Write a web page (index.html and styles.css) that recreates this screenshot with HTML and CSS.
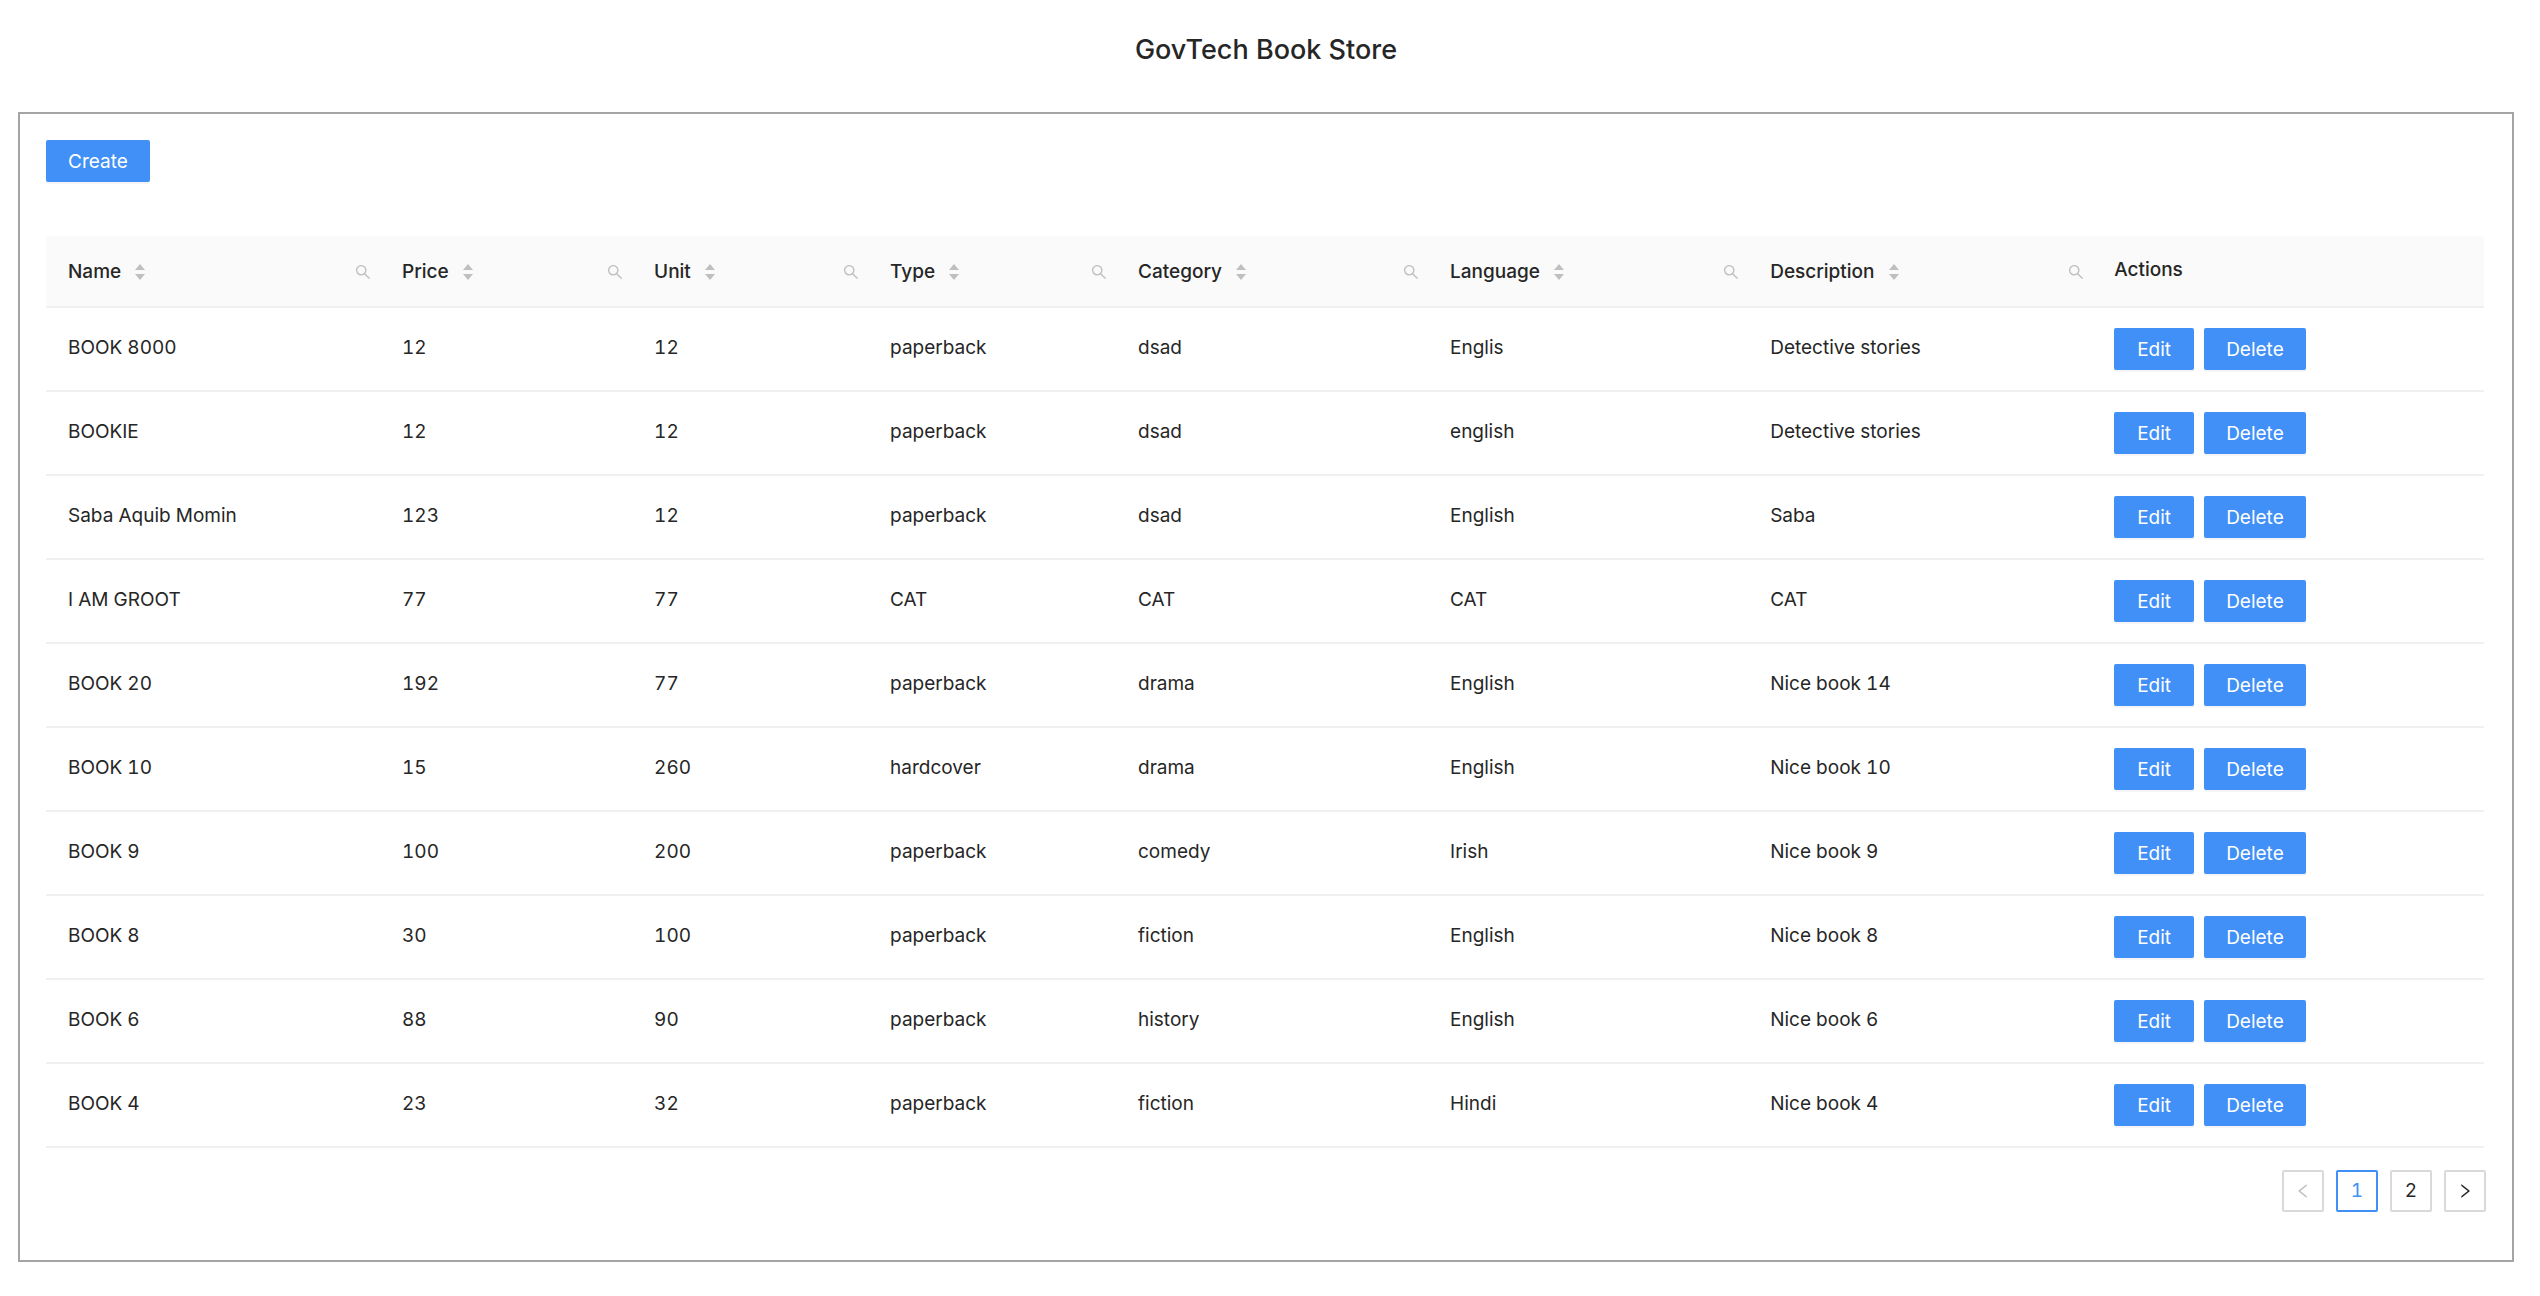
FILE: index.html
```html
<!DOCTYPE html>
<html lang="en">
<head>
<meta charset="utf-8">
<title>GovTech Book Store</title>
<link rel="stylesheet" href="styles.css">
</head>
<body>
<svg class="sprite" aria-hidden="true">
  <symbol id="sort" viewBox="0 0 10 16"><path d="M5 0L10 6H0zM0 10H10L5 16z"/></symbol>
  <symbol id="search" viewBox="0 0 1024 1024"><path d="M909.6 854.5L649.9 594.8C690.2 542.7 712 479 712 412c0-80.2-31.3-155.4-87.9-212.1-56.6-56.7-132-87.9-212.1-87.9s-155.5 31.3-212.1 87.9C143.2 256.5 112 331.8 112 412c0 80.1 31.3 155.5 87.9 212.1C256.5 680.8 331.8 712 412 712c67 0 130.6-21.8 182.7-62l259.7 259.6a8.2 8.2 0 0011.6 0l43.6-43.5a8.2 8.2 0 000-11.6zM570.4 570.4C528 612.7 471.8 636 412 636s-116-23.3-158.4-65.6C211.3 528 188 471.8 188 412s23.3-116.1 65.6-158.4C296 211.3 352.2 188 412 188s116.1 23.2 158.4 65.6S636 352.2 636 412s-23.3 116.1-65.6 158.4z"/></symbol>
  <symbol id="left" viewBox="0 0 1024 1024"><path d="M724 218.3V141c0-6.7-7.7-10.4-12.9-6.3L260.3 486.8a31.86 31.86 0 000 50.3l450.8 352.1c5.3 4.1 12.9.4 12.9-6.3v-77.3c0-4.9-2.3-9.6-6.1-12.6l-360-281 360-281.1c3.8-3 6.1-7.7 6.1-12.6z"/></symbol>
  <symbol id="right" viewBox="0 0 1024 1024"><path d="M765.7 486.8L314.9 134.7A7.97 7.97 0 00302 141v77.3c0 4.9 2.3 9.6 6.1 12.6l360 281.1-360 281.1c-3.9 3-6.1 7.7-6.1 12.6V883c0 6.7 7.7 10.4 12.9 6.3l450.8-352.1a31.96 31.96 0 000-50.4z"/></symbol>
</svg>
<h1 class="title">GovTech Book Store</h1>
<main class="panel">
  <button class="btn" type="button">Create</button>
  <table class="books">
    <colgroup>
      <col class="col-name"><col class="col-price"><col class="col-unit"><col class="col-type"><col class="col-category"><col class="col-language"><col class="col-description"><col>
    </colgroup>
    <thead>
      <tr>
        <th scope="col"><div class="head"><span>Name</span><svg class="sort"><use href="#sort"/></svg><button class="filter" type="button" aria-label="Search name"><svg class="icon"><use href="#search"/></svg></button></div></th>
        <th scope="col"><div class="head"><span>Price</span><svg class="sort"><use href="#sort"/></svg><button class="filter" type="button" aria-label="Search price"><svg class="icon"><use href="#search"/></svg></button></div></th>
        <th scope="col"><div class="head"><span>Unit</span><svg class="sort"><use href="#sort"/></svg><button class="filter" type="button" aria-label="Search unit"><svg class="icon"><use href="#search"/></svg></button></div></th>
        <th scope="col"><div class="head"><span>Type</span><svg class="sort"><use href="#sort"/></svg><button class="filter" type="button" aria-label="Search type"><svg class="icon"><use href="#search"/></svg></button></div></th>
        <th scope="col"><div class="head"><span>Category</span><svg class="sort"><use href="#sort"/></svg><button class="filter" type="button" aria-label="Search category"><svg class="icon"><use href="#search"/></svg></button></div></th>
        <th scope="col"><div class="head"><span>Language</span><svg class="sort"><use href="#sort"/></svg><button class="filter" type="button" aria-label="Search language"><svg class="icon"><use href="#search"/></svg></button></div></th>
        <th scope="col"><div class="head"><span>Description</span><svg class="sort"><use href="#sort"/></svg><button class="filter" type="button" aria-label="Search description"><svg class="icon"><use href="#search"/></svg></button></div></th>
        <th scope="col" class="plain">Actions</th>
      </tr>
    </thead>
    <tbody>
      <tr><td>BOOK 8000</td><td>12</td><td>12</td><td>paperback</td><td>dsad</td><td>Englis</td><td>Detective stories</td><td class="actions"><div class="group"><button class="btn" type="button">Edit</button><button class="btn" type="button">Delete</button></div></td></tr>
      <tr><td>BOOKIE</td><td>12</td><td>12</td><td>paperback</td><td>dsad</td><td>english</td><td>Detective stories</td><td class="actions"><div class="group"><button class="btn" type="button">Edit</button><button class="btn" type="button">Delete</button></div></td></tr>
      <tr><td>Saba Aquib Momin</td><td>123</td><td>12</td><td>paperback</td><td>dsad</td><td>English</td><td>Saba</td><td class="actions"><div class="group"><button class="btn" type="button">Edit</button><button class="btn" type="button">Delete</button></div></td></tr>
      <tr><td>I AM GROOT</td><td>77</td><td>77</td><td>CAT</td><td>CAT</td><td>CAT</td><td>CAT</td><td class="actions"><div class="group"><button class="btn" type="button">Edit</button><button class="btn" type="button">Delete</button></div></td></tr>
      <tr><td>BOOK 20</td><td>192</td><td>77</td><td>paperback</td><td>drama</td><td>English</td><td>Nice book 14</td><td class="actions"><div class="group"><button class="btn" type="button">Edit</button><button class="btn" type="button">Delete</button></div></td></tr>
      <tr><td>BOOK 10</td><td>15</td><td>260</td><td>hardcover</td><td>drama</td><td>English</td><td>Nice book 10</td><td class="actions"><div class="group"><button class="btn" type="button">Edit</button><button class="btn" type="button">Delete</button></div></td></tr>
      <tr><td>BOOK 9</td><td>100</td><td>200</td><td>paperback</td><td>comedy</td><td>Irish</td><td>Nice book 9</td><td class="actions"><div class="group"><button class="btn" type="button">Edit</button><button class="btn" type="button">Delete</button></div></td></tr>
      <tr><td>BOOK 8</td><td>30</td><td>100</td><td>paperback</td><td>fiction</td><td>English</td><td>Nice book 8</td><td class="actions"><div class="group"><button class="btn" type="button">Edit</button><button class="btn" type="button">Delete</button></div></td></tr>
      <tr><td>BOOK 6</td><td>88</td><td>90</td><td>paperback</td><td>history</td><td>English</td><td>Nice book 6</td><td class="actions"><div class="group"><button class="btn" type="button">Edit</button><button class="btn" type="button">Delete</button></div></td></tr>
      <tr><td>BOOK 4</td><td>23</td><td>32</td><td>paperback</td><td>fiction</td><td>Hindi</td><td>Nice book 4</td><td class="actions"><div class="group"><button class="btn" type="button">Edit</button><button class="btn" type="button">Delete</button></div></td></tr>
    </tbody>
  </table>
  <nav class="pager" aria-label="Pages">
    <button class="page" type="button" aria-label="Previous page" disabled><svg class="icon"><use href="#left"/></svg></button>
    <button class="page current" type="button" aria-current="page">1</button>
    <button class="page" type="button">2</button>
    <button class="page" type="button" aria-label="Next page"><svg class="icon"><use href="#right"/></svg></button>
  </nav>
</main>
</body>
</html>
```

FILE: styles.css
```css
* { box-sizing: border-box; }

body {
  margin: 0;
  padding: 0 26px 34px 18px;
  background: #fff;
  color: #262626;
  font: 400 19px/28px Inter, "Liberation Sans", sans-serif;
  font-variant-numeric: tabular-nums;
}

button { font: inherit; }

svg { display: block; fill: currentColor; }

.sprite { display: none; }

.title {
  margin: 0;
  padding: 32px 0 44px;
  font-size: 27px;
  line-height: 36px;
  font-weight: 500;
  text-align: center;
}

.panel {
  padding: 26px 28px 48px 26px;
  border: 2px solid #a5a5a5;
}

.btn {
  display: block;
  min-width: 80px;
  height: 42px;
  padding: 2px 22px 0;
  border: 0;
  border-radius: 2px;
  background: #4090f7;
  box-shadow: 0 2px 0 rgba(0, 0, 0, 0.04);
  color: #fff;
  white-space: nowrap;
}

.books {
  width: 100%;
  margin-top: 54px;
  border-spacing: 0;
  table-layout: fixed;
}

.col-name { width: 13.7%; }
.col-price { width: 10.34%; }
.col-unit { width: 9.68%; }
.col-type { width: 10.17%; }
.col-category { width: 12.8%; }
.col-language { width: 13.13%; }
.col-description { width: 14.15%; }

.books th,
.books td {
  padding: 0 22px;
  border-bottom: 2px solid #f0f0f0;
  text-align: left;
}

.books th {
  height: 72px;
  padding-top: 2px;
  background: #fafafa;
  font-weight: 500;
}

.books th:first-child { border-top-left-radius: 2px; }
.books th:last-child { border-top-right-radius: 2px; }

.books .plain {
  padding: 0 21px 2px;
}

.books td {
  height: 84px;
  padding-bottom: 2px;
}

.books .actions { padding: 0 21px; }

.head {
  display: flex;
  align-items: center;
}

.sort {
  width: 10px;
  height: 16px;
  margin-left: 14px;
  color: #bfbfbf;
}

.filter {
  margin: 0 -14px 0 auto;
  padding: 0;
  border: 0;
  background: none;
  color: #bfbfbf;
}

.icon {
  width: 18px;
  height: 18px;
}

.group {
  display: flex;
  gap: 10px;
}

.pager {
  display: flex;
  justify-content: flex-end;
  gap: 12px;
  margin: 22px -2px 0 0;
}

.page {
  display: flex;
  align-items: center;
  justify-content: center;
  width: 42px;
  height: 42px;
  padding: 0;
  border: 2px solid #d9d9d9;
  border-radius: 2px;
  background: #fff;
  color: #262626;
}

.page:disabled { color: #bfbfbf; }

.current {
  border-color: #4090f7;
  color: #4090f7;
}
```
